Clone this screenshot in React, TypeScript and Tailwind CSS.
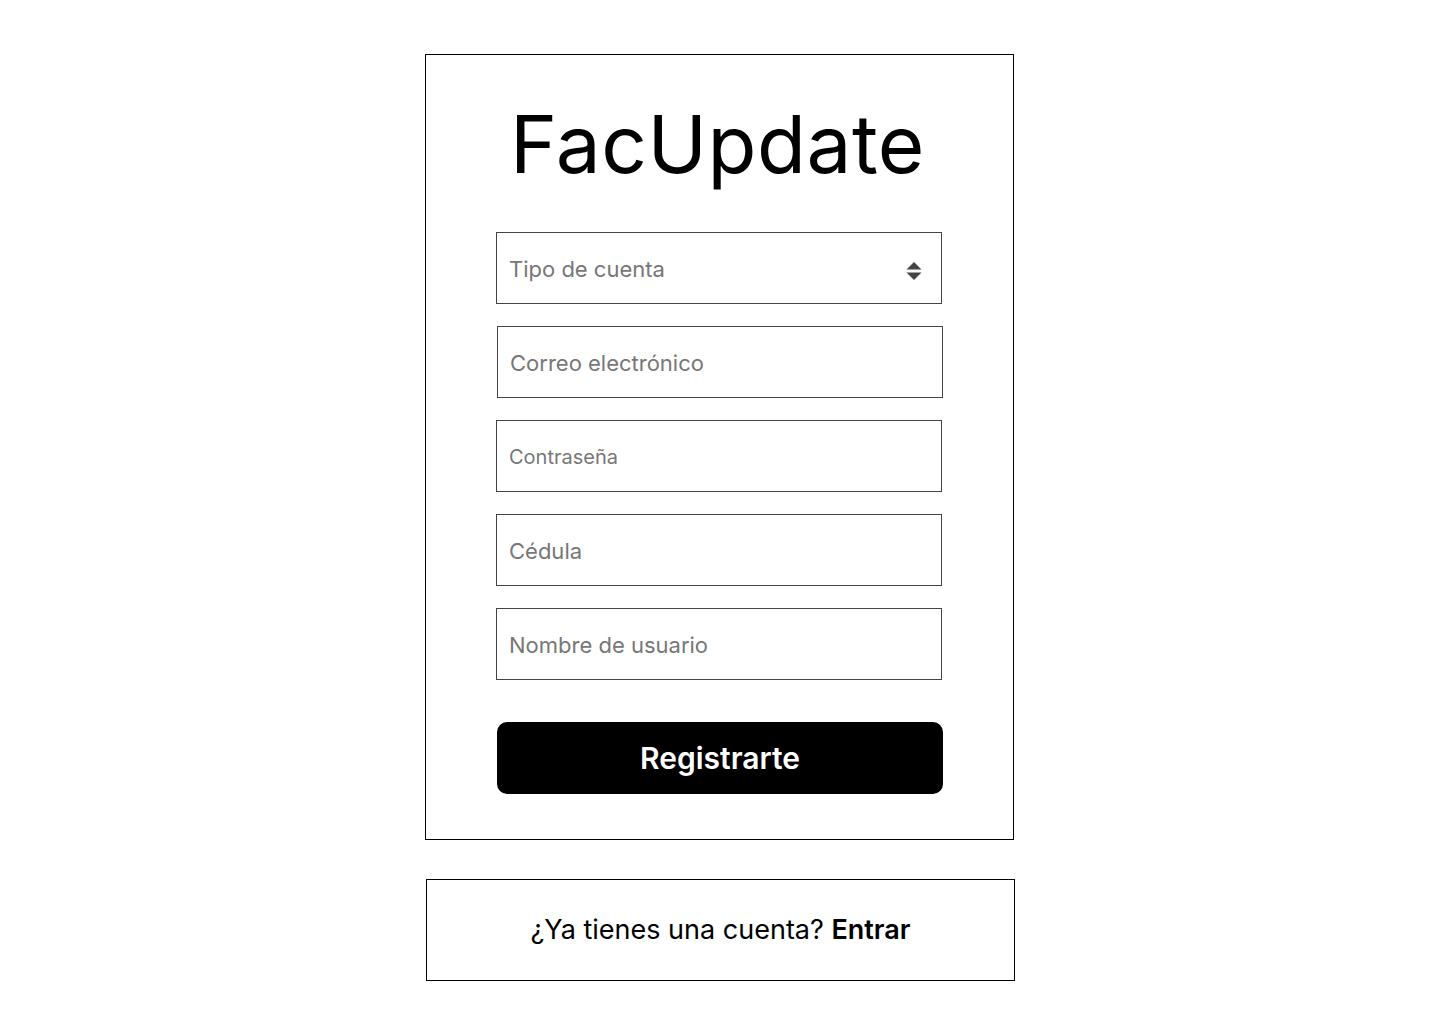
import { useState } from "react";

const fields = [
  { name: "email", placeholder: "Correo electrónico", type: "email", text: "text-[22px]", shift: "ml-[1px]" },
  { name: "password", placeholder: "Contraseña", type: "password", text: "text-[20px]", shift: "" },
  { name: "cedula", placeholder: "Cédula", type: "text", text: "text-[22px]", shift: "" },
  { name: "username", placeholder: "Nombre de usuario", type: "text", text: "text-[22px]", shift: "" },
];

const SortArrows = () => (
  <svg width="16" height="20" viewBox="0 0 16 20" className="text-[#444]">
    <path d="M8 1 L15.5 8.5 L0.5 8.5 Z" fill="currentColor" />
    <path d="M8 19 L15.5 11.5 L0.5 11.5 Z" fill="currentColor" />
  </svg>
);

const App = () => {
  const [accountType, setAccountType] = useState("");

  return (
    <div className="min-h-screen bg-white pt-[54px] font-['Inter',sans-serif] text-black">
      <div className="w-[590px] mx-auto flex flex-col">
        <div className="w-[589px] border border-black flex flex-col items-center pt-[49px] pb-[45px]">
          <h1 className="mr-[4px] text-[80px] leading-none font-normal tracking-[0.5px]">FacUpdate</h1>

          <form className="self-start ml-[70px] mt-[48px] flex flex-col gap-[22px] w-[446px]" onSubmit={(e) => e.preventDefault()}>
            {/* Account type */}
            <div className="relative">
              <select
                value={accountType}
                onChange={(e) => setAccountType(e.target.value)}
                className={`appearance-none w-full h-[72px] border border-[#444] bg-white pl-[12px] pr-10 pt-[2px] text-[22px] outline-none ${accountType ? "text-black" : "text-[#777]"}`}
              >
                <option value="" disabled hidden>Tipo de cuenta</option>
                <option value="estudiante">Estudiante</option>
                <option value="profesor">Profesor</option>
              </select>
              <div className="pointer-events-none absolute right-[20px] top-[29px]">
                <SortArrows />
              </div>
            </div>

            {fields.map((f) => (
              <input
                key={f.name}
                name={f.name}
                type={f.type}
                placeholder={f.placeholder}
                className={`w-full h-[72px] border border-[#444] bg-white pl-[12px] pt-[2px] ${f.text} ${f.shift} outline-none placeholder:text-[#777]`}
              />
            ))}

            <button
              type="submit"
              className="mt-[20px] ml-[1px] w-full h-[72px] rounded-[10px] bg-black text-white text-[30px] font-semibold"
            >
              Registrarte
            </button>
          </form>
        </div>

        <div className="mt-[39px] ml-[1px] w-[589px] h-[102px] border border-black flex items-center justify-center">
          <p className="text-[27px]">
            ¿Ya tienes una cuenta? <a href="#" className="font-semibold">Entrar</a>
          </p>
        </div>
      </div>
    </div>
  );
};

export default App;
